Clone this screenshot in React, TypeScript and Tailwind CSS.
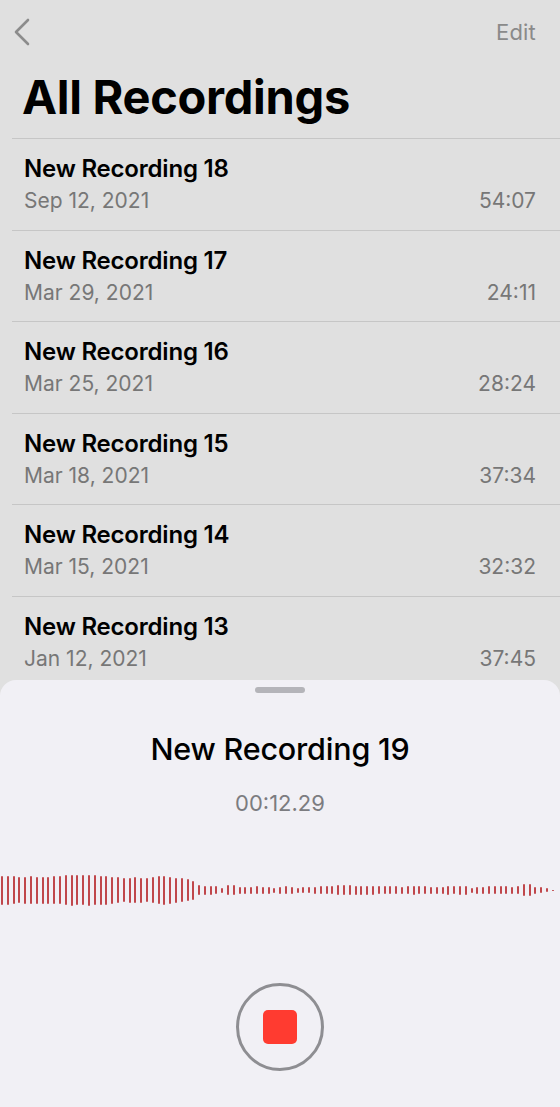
import React from "react";

const recordings = [
  { title: "New Recording 18", date: "Sep 12, 2021", length: "54:07" },
  { title: "New Recording 17", date: "Mar 29, 2021", length: "24:11" },
  { title: "New Recording 16", date: "Mar 25, 2021", length: "28:24" },
  { title: "New Recording 15", date: "Mar 18, 2021", length: "37:34" },
  { title: "New Recording 14", date: "Mar 15, 2021", length: "32:32" },
  { title: "New Recording 13", date: "Jan 12, 2021", length: "37:45" },
];

// bar heights for the live waveform, left to right
const bars = [
  29, 29, 28, 26, 27, 28, 27, 27, 27, 28, 28, 30, 31, 30, 30, 31, 30, 29, 29, 27,
  26, 24, 25, 26, 25, 24, 26, 28, 29, 27, 25, 24, 22, 19,
  10, 9, 9, 8, 5, 10, 10, 7, 7, 7, 8, 7, 7, 5, 7, 8, 7, 5, 6, 6,
  7, 8, 8, 8, 10, 10, 10, 9, 9, 9, 9, 8, 8, 8, 8, 7, 8, 9, 8, 8,
  7, 7, 7, 9, 8, 9, 9, 5, 7, 7, 8, 8, 8, 8, 7, 8, 12, 12, 7, 6, 4, 1,
];

export default function App() {
  return (
    <div
      className="w-[560px] h-[1107px] overflow-hidden flex flex-col bg-[#e0e0e0]"
      style={{ fontFamily: "Inter, 'Noto Sans', sans-serif" }}
    >
      <div className="h-[680px] overflow-hidden shrink-0">
        <div className="flex items-center justify-between pl-[13px] pr-[24px] pt-[18px] h-[46px]">
          <svg width="20" height="30" viewBox="0 0 20 30" fill="none">
            <path d="M15 3 L3 15 L15 27" stroke="#8c8c8c" strokeWidth="2.6" strokeLinecap="round" strokeLinejoin="round" />
          </svg>
          <span className="text-[22px] text-[#8a8a8a] tracking-[0.2px]">Edit</span>
        </div>
        <h1 className="pl-[22px] pt-[20px] h-[92px] text-[47px] font-bold leading-[62px] text-black tracking-[-0.3px]">
          All Recordings
        </h1>
        <div className="ml-[12px] border-t border-[#c6c6c6]">
          {recordings.map((r) => (
            <div key={r.title} className="h-[91.5px] border-b border-[#c6c6c6] pl-[12px] pr-[24px] pt-[14px]">
              <div className="text-[24px] font-semibold leading-[32px] text-black tracking-[-0.2px]">{r.title}</div>
              <div className="flex justify-between text-[21px] leading-[32px] text-[#777777]">
                <span>{r.date}</span>
                <span>{r.length}</span>
              </div>
            </div>
          ))}
        </div>
      </div>

      <div className="flex-1 bg-[#f1f0f5] rounded-t-[16px] flex flex-col items-center">
        <div className="mt-[7px] w-[50px] h-[6px] rounded-full bg-[#b4b4b9]" />
        <div className="mt-[36px] text-[30.5px] font-medium leading-[40px] text-black tracking-[-0.2px]">
          New Recording 19
        </div>
        <div className="mt-[20px] text-[22px] leading-[28px] text-[#7c7c80]">00:12.29</div>
        <div className="mt-[57px] self-stretch h-[32px] flex items-center gap-[3.8px] pl-[1px]">
          {bars.map((h, i) => (
            <div key={i} className="w-[2px] shrink-0 rounded-full bg-[#c0474b]" style={{ height: h }} />
          ))}
        </div>
        <div className="mt-[77px] w-[88px] h-[88px] rounded-full border-[3px] border-[#8e8e92] flex items-center justify-center">
          <div className="w-[34px] h-[34px] rounded-[5px] bg-[#ff3b30]" />
        </div>
      </div>
    </div>
  );
}
